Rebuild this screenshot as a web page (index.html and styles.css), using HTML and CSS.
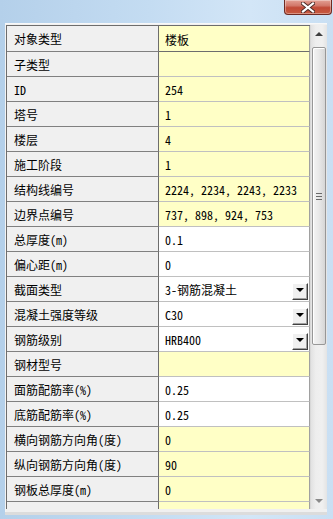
FILE: index.html
```html
<!DOCTYPE html>
<html>
<head>
    <title>属性</title>
    <link rel="stylesheet" href="styles.css">
</head>
<body>
<div class="window">
    <div class="titlebar">
        <div class="close">
            <svg width="14" height="11" viewBox="0 0 14 11">
                <path d="M2 1.5 L12 9.5 M12 1.5 L2 9.5" stroke="#4a2a26" stroke-width="4" stroke-linecap="square"/>
                <path d="M2 1.5 L12 9.5 M12 1.5 L2 9.5" stroke="#ffffff" stroke-width="2.2" stroke-linecap="square"/>
            </svg>
        </div>
    </div>

    <div class="client">
        <div class="grid">
            <div class="row first"><div class="lbl">对象类型</div><div class="val yel focus">楼板</div></div>
            <div class="row"><div class="lbl">子类型</div><div class="val yel"></div></div>
            <div class="row"><div class="lbl">ID</div><div class="val yel">254</div></div>
            <div class="row"><div class="lbl">塔号</div><div class="val yel">1</div></div>
            <div class="row"><div class="lbl">楼层</div><div class="val yel">4</div></div>
            <div class="row"><div class="lbl">施工阶段</div><div class="val yel">1</div></div>
            <div class="row"><div class="lbl">结构线编号</div><div class="val yel">2224, 2234, 2243, 2233</div></div>
            <div class="row"><div class="lbl">边界点编号</div><div class="val yel">737, 898, 924, 753</div></div>
            <div class="row"><div class="lbl">总厚度(m)</div><div class="val">0.1</div></div>
            <div class="row"><div class="lbl">偏心距(m)</div><div class="val">0</div></div>
            <div class="row"><div class="lbl">截面类型</div><div class="val">3-钢筋混凝土<span class="drop"><i></i></span></div></div>
            <div class="row"><div class="lbl">混凝土强度等级</div><div class="val">C30<span class="drop"><i></i></span></div></div>
            <div class="row"><div class="lbl">钢筋级别</div><div class="val">HRB400<span class="drop"><i></i></span></div></div>
            <div class="row"><div class="lbl">钢材型号</div><div class="val yel"></div></div>
            <div class="row"><div class="lbl">面筋配筋率(%)</div><div class="val">0.25</div></div>
            <div class="row"><div class="lbl">底筋配筋率(%)</div><div class="val">0.25</div></div>
            <div class="row"><div class="lbl">横向钢筋方向角(度)</div><div class="val yel">0</div></div>
            <div class="row"><div class="lbl">纵向钢筋方向角(度)</div><div class="val yel">90</div></div>
            <div class="row"><div class="lbl">钢板总厚度(m)</div><div class="val yel">0</div></div>
            <div class="row"><div class="lbl"></div><div class="val yel"></div></div>
        </div>

        <div class="scrollbar">
            <div class="sb-btn"><i class="up"></i></div>
            <div class="thumb"><span class="grip"></span></div>
            <div class="sb-space"></div>
            <div class="sb-btn"><i class="down"></i></div>
        </div>
    </div>
</div>
</body>
</html>
```

FILE: styles.css
```css
body {
    margin: 0;
    font-family: "Noto Sans Mono CJK SC", "Noto Sans CJK SC", "Liberation Mono", monospace;
    font-size: 12px;
    color: #000;
}
.window {
    width: 333px;
    height: 519px;
    overflow: hidden;
    background: linear-gradient(to right, #b4d0ea 0%, #c4dcf2 45%, #d3e6f7 75%, #c9dff3 100%);
}
.titlebar {
    height: 23px;
    display: flex;
    justify-content: flex-end;
    padding-right: 1px;
    box-sizing: border-box;
}
.close {
    width: 46px;
    height: 14px;
    border: 1px solid #6e2a22;
    border-top: none;
    border-radius: 0 0 4px 4px;
    background: linear-gradient(to bottom, #e3a195 0%, #d2786a 40%, #c14a37 55%, #c75b40 100%);
    display: flex;
    align-items: center;
    justify-content: center;
    box-shadow: inset 0 0 0 1px rgba(255,255,255,0.35);
}

.client {
    margin-left: 5px;
    width: 322px;
    height: 489px;
    box-sizing: border-box;
    border-top: 1px solid #f8f8f8;
    border-left: 1px solid #f4f4f4;
    padding-top: 1px;
    background: #f0f0f0;
    display: flex;
    align-items: flex-start;
    box-shadow: 0 3px 0 #dcdcdc;
}
.grid {
    width: 304px;
    height: 484px;
    overflow: hidden;
    box-sizing: border-box;
    border-left: 1px solid #6d6d6d;
    border-top: 1px solid #6d6d6d;
    background: #ffffc6;
}
.row {
    display: flex;
    height: 25px;
}
.row.first {
    height: 26px;
}
.lbl {
    width: 152px;
    box-sizing: border-box;
    background: #f0f0f0;
    border-right: 1px solid #6d6d6d;
    border-bottom: 1px solid #808080;
    padding-left: 7px;
    line-height: 25px;
    white-space: nowrap;
}
.val {
    flex: 1;
    display: flex;
    align-items: center;
    background: #ffffff;
    border-right: 1px solid #a0a0a0;
    border-bottom: 1px solid #c0c0c0;
    padding-left: 6px;
    padding-top: 1px;
    white-space: nowrap;
}
.val.yel {
    background: #ffffc6;
}
.val.focus {
    border-bottom-color: #6d6d6d;
}
.drop {
    margin-left: auto;
    margin-right: 1px;
    margin-top: 3px;
    width: 16px;
    height: 17px;
    box-sizing: border-box;
    background: #f0f0f0;
    border-top: 1px solid #ffffff;
    border-left: 1px solid #ffffff;
    border-right: 1px solid #404040;
    border-bottom: 1px solid #404040;
    box-shadow: inset -1px -1px 0 #a0a0a0;
    display: flex;
    align-items: center;
    justify-content: center;
}
.drop i {
    width: 0;
    height: 0;
    border-left: 4px solid transparent;
    border-right: 4px solid transparent;
    border-top: 4px solid #000;
    margin-top: -2px;
}

.scrollbar {
    width: 17px;
    height: 484px;
    display: flex;
    flex-direction: column;
    align-items: center;
    background: linear-gradient(to right, #e2e2e2, #eeeeee 30%, #f0f0f0 70%, #e4e4e4);
    border-left: 1px solid #d8d8d8;
    box-sizing: border-box;
}
.sb-btn {
    height: 17px;
    width: 100%;
    display: flex;
    align-items: center;
    justify-content: center;
}
.sb-btn i {
    width: 0;
    height: 0;
    border-left: 4px solid transparent;
    border-right: 4px solid transparent;
}
.sb-btn i.up {
    border-bottom: 4px solid #404040;
}
.sb-btn i.down {
    border-top: 4px solid #8a8a8a;
}
.thumb {
    margin-top: 5px;
    width: 14px;
    height: 298px;
    box-sizing: border-box;
    border: 1px solid #979797;
    border-radius: 2px;
    background: linear-gradient(to right, #f4f4f4, #e8e8e8 50%, #d6d6d6);
    box-shadow: inset 1px 1px 0 #ffffff;
    display: flex;
    align-items: center;
    justify-content: center;
}
.grip {
    width: 6px;
    height: 7px;
    background: repeating-linear-gradient(to bottom, #6a6a6a 0 1px, transparent 1px 3px);
}
.sb-space {
    flex: 1;
}
```
